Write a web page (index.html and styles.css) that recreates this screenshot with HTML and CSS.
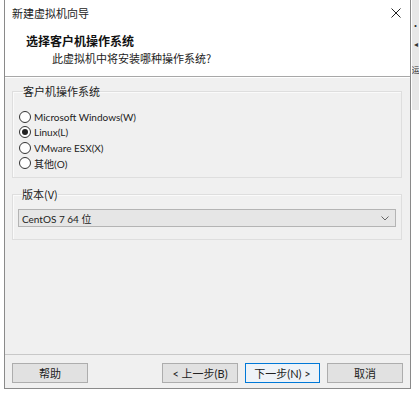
FILE: index.html
```html
<!DOCTYPE html>
<html lang="zh">
<head>
<meta charset="utf-8">
<link rel="stylesheet" href="styles.css">
</head>
<body>
<div class="screen">
  <div class="window">
    <div class="titlebar">
      <span class="title">新建虚拟机向导</span>
      <svg class="close" width="10" height="10" viewBox="0 0 10 10"><path d="M0.5 0.5L9.5 9.5M9.5 0.5L0.5 9.5" stroke="#222" stroke-width="1"/></svg>
    </div>
    <div class="header">
      <div class="h-title">选择客户机操作系统</div>
      <div class="h-sub">此虚拟机中将安装哪种操作系统?</div>
    </div>
    <div class="content">
      <fieldset class="group group-os">
        <legend>客户机操作系统</legend>
        <div class="radio"><span class="dot"></span><span>Microsoft Windows(W)</span></div>
        <div class="radio checked"><span class="dot"></span><span>Linux(L)</span></div>
        <div class="radio"><span class="dot"></span><span>VMware ESX(X)</span></div>
        <div class="radio"><span class="dot"></span><span>其他(O)</span></div>
      </fieldset>
      <fieldset class="group group-ver">
        <legend>版本(V)</legend>
        <div class="select">
          <span>CentOS 7 64 位</span>
          <svg class="chev" width="8" height="5" viewBox="0 0 8 5"><path d="M0.5 0.5L4 4L7.5 0.5" fill="none" stroke="#666" stroke-width="1"/></svg>
        </div>
      </fieldset>
    </div>
    <div class="footer">
      <button class="btn help">帮助</button>
      <button class="btn">&lt; 上一步(B)</button>
      <button class="btn default">下一步(N) &gt;</button>
      <button class="btn">取消</button>
    </div>
  </div>
  <div class="edge">
    <span class="e-dot">·</span>
    <span class="e-tri">◂</span>
    <span class="e-char">运</span>
  </div>
</div>
</body>
</html>
```
FILE: styles.css
```css
html, body {
  margin: 0;
  padding: 0;
  background: #ffffff;
}
body {
  font-family: "Lato", "Noto Sans CJK SC", sans-serif;
  font-size: 11px;
  color: #1a1a1a;
}
.screen {
  display: flex;
  width: 419px;
  height: 395px;
  overflow: hidden;
  padding-left: 4px;
  box-sizing: border-box;
}
.window {
  width: 407px;
  height: 389px;
  box-sizing: border-box;
  border-left: 1px solid #8a8a8a;
  border-right: 1px solid #8a8a8a;
  border-bottom: 1px solid #8a8a8a;
  display: flex;
  flex-direction: column;
  background: #f0f0f0;
  flex: none;
}
.titlebar {
  height: 26px;
  background: #ffffff;
  display: flex;
  align-items: center;
  justify-content: space-between;
  padding: 0 9px 0 7px;
}
.title {
  font-family: "Noto Sans CJK SC", sans-serif;
  font-size: 11px;
  color: #222;
}
.close {
  display: block;
}
.header {
  background: #ffffff;
  height: 51px;
  box-sizing: border-box;
  padding-top: 7px;
  border-bottom: 1px solid #a8a8a8;
}
.h-title {
  font-family: "Noto Sans CJK SC", sans-serif;
  font-weight: bold;
  font-size: 12px;
  line-height: 16px;
  padding-left: 21px;
  color: #111;
}
.h-sub {
  font-family: "Noto Sans CJK SC", sans-serif;
  font-size: 11px;
  line-height: 16px;
  margin-top: 1px;
  padding-left: 47px;
  color: #222;
}
.content {
  flex: 1;
  padding: 6px 8px 0 7px;
  border-top: 1px solid #ffffff;
}
.group {
  margin: 0;
  border: 1px solid #dedede;
  box-shadow: inset 1px 1px 0 #fafafa;
  min-width: 0;
}
.group legend {
  font-family: "Noto Sans CJK SC", sans-serif;
  font-size: 11px;
  line-height: 14px;
  padding: 0;
  margin-left: 4px;
  color: #222;
}
.group-os {
  padding: 11px 6px 6px 6px;
}
.radio {
  height: 15.5px;
  display: flex;
  align-items: center;
  color: #222;
  font-size: 10px;
}
.radio .dot {
  width: 10px;
  height: 10px;
  border: 1px solid #333;
  border-radius: 50%;
  margin-right: 3px;
  background: #fff;
  display: flex;
  align-items: center;
  justify-content: center;
  flex: none;
}
.radio.checked .dot::after {
  content: "";
  width: 6px;
  height: 6px;
  border-radius: 50%;
  background: #222;
}
.group-ver {
  margin-top: 9px;
  padding: 8px 5px 12px 5px;
}
.select {
  height: 18px;
  box-sizing: border-box;
  border: 1px solid #b4b4b4;
  background: #e6e6e6;
  display: flex;
  align-items: center;
  justify-content: space-between;
  padding: 0 6px 0 3px;
  color: #222;
  font-size: 10px;
}
.footer {
  height: 34px;
  box-sizing: border-box;
  border-top: 1px solid #c8c8c8;
  display: flex;
  align-items: flex-start;
  gap: 7px;
  padding: 8px 7px 0 7px;
}
.btn {
  width: 76px;
  height: 20px;
  box-sizing: border-box;
  border: 1px solid #adadad;
  background: #e1e1e1;
  font-family: "Lato", "Noto Sans CJK SC", sans-serif;
  font-size: 11px;
  color: #222;
  padding: 0;
  margin: 0;
}
.btn.help {
  margin-right: auto;
}
.btn.default {
  border-color: #0078d7;
  background: #eef3f8;
  width: 75px;
}
.edge {
  width: 8px;
  height: 110px;
  background: #e8e8e8;
  margin-left: 1px;
  display: flex;
  flex-direction: column;
  align-items: center;
  overflow: hidden;
  color: #333;
  font-family: "Noto Sans CJK SC", sans-serif;
  font-size: 8px;
  line-height: 8px;
}
.e-dot {
  margin-top: 22px;
  font-weight: bold;
}
.e-tri {
  margin-top: 10px;
}
.e-char {
  margin-top: 18px;
}
```
